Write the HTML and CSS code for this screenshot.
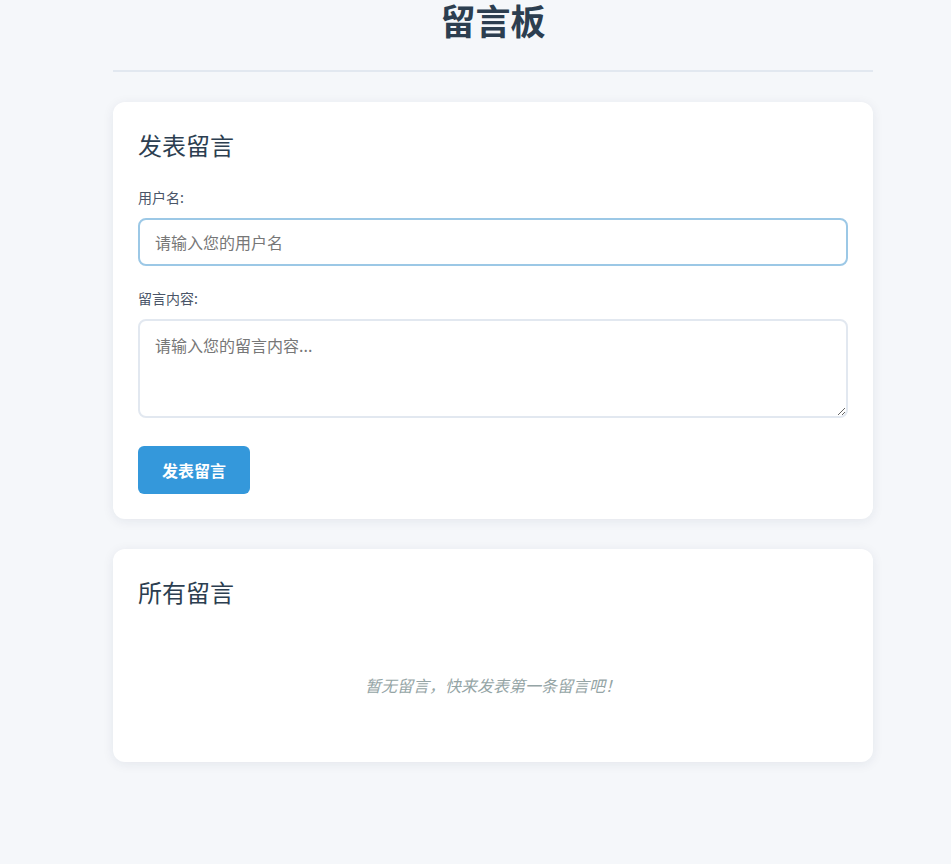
FILE: index.html
```html
<!DOCTYPE html>
<html lang="zh-CN">
<head>
<meta charset="UTF-8">
<title>留言板</title>
<link rel="stylesheet" href="styles.css">
</head>
<body>
<div class="container">
  <header class="header">
    <h1 class="title">留言板</h1>
  </header>

  <section class="card">
    <h2 class="card-title">发表留言</h2>
    <form class="form">
      <div class="form-group">
        <label class="label" for="username">用户名:</label>
        <input class="input input-focus" id="username" type="text" placeholder="请输入您的用户名">
      </div>
      <div class="form-group form-group-last">
        <label class="label" for="content">留言内容:</label>
        <textarea class="input textarea" id="content" placeholder="请输入您的留言内容..."></textarea>
      </div>
      <button class="btn" type="button">发表留言</button>
    </form>
  </section>

  <section class="card">
    <h2 class="card-title">所有留言</h2>
    <div class="empty">暂无留言，快来发表第一条留言吧！</div>
  </section>
</div>
</body>
</html>
```

FILE: styles.css
```css
* {
  box-sizing: border-box;
}

html, body {
  margin: 0;
  padding: 0;
}

body {
  background: #f5f7fa;
  font-family: "Noto Sans CJK SC", "Noto Sans", "Liberation Sans", sans-serif;
  color: #2c3e50;
}

.container {
  width: 760px;
  margin-left: 113px;
  padding-bottom: 40px;
}

.header {
  text-align: center;
  padding-bottom: 30px;
  border-bottom: 2px solid #e2e8f0;
  margin-bottom: 30px;
}

.title {
  margin: 0;
  font-size: 35px;
  line-height: 40px;
  font-weight: 700;
  color: #2c3e50;
}

.card {
  background: #ffffff;
  border-radius: 12px;
  padding: 25px;
  box-shadow: 0 2px 12px rgba(30, 40, 80, 0.08);
  margin-bottom: 30px;
}

.card-title {
  margin: 0 0 24px 0;
  font-size: 24px;
  line-height: 35px;
  font-weight: 400;
  color: #2c3e50;
}

.form {
  display: flex;
  flex-direction: column;
  align-items: flex-start;
}

.form-group {
  width: 100%;
  margin-bottom: 21px;
}

.form-group-last {
  margin-bottom: 28px;
}

.label {
  display: block;
  font-size: 14px;
  line-height: 22px;
  margin-bottom: 10px;
  color: #4a5568;
}

.input {
  display: block;
  width: 710px;
  height: 48px;
  padding: 12px 15px;
  border: 2px solid #e2e8f0;
  border-radius: 8px;
  font-family: "Noto Sans CJK SC", "Noto Sans", sans-serif;
  font-size: 16px;
  line-height: 20px;
  color: #2c3e50;
  background: #ffffff;
  outline: none;
}

.input-focus {
  border-color: #9cc8e6;
}

.input::placeholder {
  color: #777777;
}

.textarea {
  height: 99px;
  line-height: 24px;
  resize: vertical;
}

.btn {
  width: 112px;
  height: 48px;
  border: none;
  border-radius: 6px;
  background: #3498db;
  color: #ffffff;
  font-family: "Noto Sans CJK SC", "Noto Sans", sans-serif;
  font-size: 16px;
  font-weight: 700;
  cursor: pointer;
}

.empty {
  padding: 40px 0;
  text-align: center;
  font-size: 16px;
  line-height: 24px;
  font-style: italic;
  color: #95a5a6;
}
```
